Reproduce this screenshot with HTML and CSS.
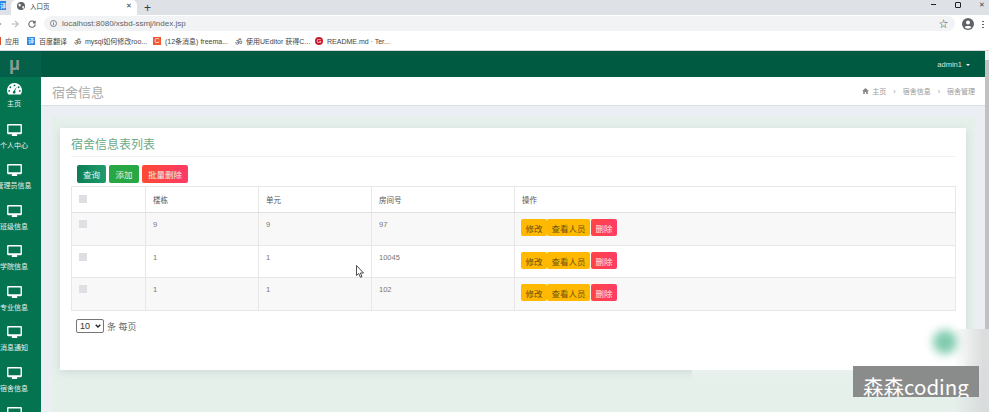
FILE: index.html
```html
<!DOCTYPE html>
<html>
<head>
  <meta charset="utf-8">
  <link rel="stylesheet" href="styles.css">
</head>
<body>
  <svg class="defs" width="0" height="0">
    <symbol id="monitor" viewBox="0 0 16 14">
      <path d="M1.2 0h13.6c.7 0 1.2.5 1.2 1.2v8.600c0 .7-.5 1.200-1.200 1.200H10.500l.5 1.600v.4H5v-.4l.5-1.600H1.200C.5 11 0 10.500 0 9.800V1.200C0 .5.500 0 1.200 0zM1.500 1.500v7.500h13V1.500z" fill="#fff" fill-rule="evenodd"/>
    </symbol>
  </svg>

  <div class="tabstrip">
    <div class="tab-stub"><span class="stub-icon">译</span></div>
    <div class="tab">
      <svg class="globe" width="8" height="8" viewBox="0 0 10 10"><circle cx="5" cy="5" r="5" fill="#5f6368"/><path d="M2 2l3 1-1 3-2-1zM6 6l3-1-1 4z" fill="#fff"/></svg>
      <span class="tab-title">入口页</span>
      <span class="tab-close">✕</span>
    </div>
    <span class="tab-new">+</span>
    <div class="win-controls">
      <span class="win-min"></span>
      <span class="win-max"></span>
      <span class="win-close">✕</span>
    </div>
  </div>

  <div class="toolbar">
    <svg class="nav-arrow" width="8" height="8" viewBox="0 0 10 10"><path d="M9 5H1M5 1L1 5l4 4" fill="none" stroke="#5f6368" stroke-width="1.300"/></svg>
    <svg class="nav-arrow" width="8" height="8" viewBox="0 0 10 10"><path d="M1 5h8M5 1l4 4-4 4" fill="none" stroke="#b4b7bb" stroke-width="1.300"/></svg>
    <svg class="nav-arrow" width="8" height="8" viewBox="0 0 10 10"><path d="M8.500 3.200A4 4 0 1 0 9 5.500M9 .8v2.800H6.200" fill="none" stroke="#5f6368" stroke-width="1.300"/></svg>
    <div class="omnibox">
      <svg width="7" height="7" viewBox="0 0 10 10"><circle cx="5" cy="5" r="4.300" fill="none" stroke="#5f6368" stroke-width="1.100"/><path d="M5 4.300v3M5 2.500v1" stroke="#5f6368" stroke-width="1.100"/></svg>
      <span class="url">localhost:8080/xsbd-ssmj/index.jsp</span>
      <span class="star">☆</span>
    </div>
    <svg class="avatar" width="12" height="12" viewBox="0 0 12 12"><circle cx="6" cy="6" r="6" fill="#5f6368"/><circle cx="6" cy="4.500" r="2" fill="#fff"/><path d="M2.500 9.200c1-1.500 6-1.500 7 0A5 5 0 0 1 2.500 9.200z" fill="#fff"/></svg>
    <span class="kebab"></span>
  </div>

  <div class="bookmarks">
    <span class="bm bm-apps"><i class="apps-dot"></i>应用</span>
    <span class="bm"><i class="bm-blue">译</i>百度翻译</span>
    <span class="bm"><i class="bm-om">ॐ</i>mysql如何修改roo...</span>
    <span class="bm"><i class="bm-red">C</i>(12条消息) freema...</span>
    <span class="bm"><i class="bm-om">ॐ</i>使用UEditor 获得C...</span>
    <span class="bm"><i class="bm-git">G</i>README.md · Ter...</span>
  </div>

  <div class="viewport">
    <div class="app">
      <div class="topbar">
        <div class="brand">μ</div>
        <div class="user">admin1 <i class="caret"></i></div>
      </div>
      <div class="main">
        <aside class="sidebar">
          <div class="side-item">
            <svg class="side-icon" width="15" height="12" viewBox="0 0 16 13"><path d="M8 0a8 8 0 0 0-6.900 12.100c.2.300.5.400.8.400h12.200c.3 0 .6-.1.800-.4A8 8 0 0 0 8 0z" fill="#fff"/><g fill="#047350"><circle cx="8" cy="2.600" r="1"/><circle cx="3.500" cy="4.600" r="1"/><circle cx="12.500" cy="4.600" r="1"/><circle cx="2.300" cy="8.600" r="1"/><circle cx="13.700" cy="8.600" r="1"/><path d="M10.600 3.800l-2 5a1.500 1.500 0 1 1-1.200-.3z"/></g></svg>
            <span>主页</span>
          </div>
          <div class="side-item"><svg class="side-icon" width="15" height="13"><use href="#monitor"/></svg><span>个人中心</span></div>
          <div class="side-item"><svg class="side-icon" width="15" height="13"><use href="#monitor"/></svg><span>管理员信息</span></div>
          <div class="side-item"><svg class="side-icon" width="15" height="13"><use href="#monitor"/></svg><span>班级信息</span></div>
          <div class="side-item"><svg class="side-icon" width="15" height="13"><use href="#monitor"/></svg><span>学院信息</span></div>
          <div class="side-item"><svg class="side-icon" width="15" height="13"><use href="#monitor"/></svg><span>专业信息</span></div>
          <div class="side-item"><svg class="side-icon" width="15" height="13"><use href="#monitor"/></svg><span>消息通知</span></div>
          <div class="side-item"><svg class="side-icon" width="15" height="13"><use href="#monitor"/></svg><span>宿舍信息</span></div>
          <div class="side-item"><svg class="side-icon" width="15" height="13"><use href="#monitor"/></svg></div>
        </aside>

        <div class="page">
          <div class="page-head">
            <h1>宿舍信息</h1>
            <div class="crumbs">
              <svg width="7" height="6" viewBox="0 0 10 9"><path d="M5 0L0 4.500h1.500V9h2.500V6h2v3h2.500V4.500H10z" fill="#888"/></svg>
              <span>主页</span><b>›</b><span>宿舍信息</span><b>›</b><span>宿舍管理</span>
            </div>
          </div>

          <div class="page-body">
            <div class="green-wrap">
              <div class="card">
                <h2>宿舍信息表列表</h2>
                <div class="actions">
                  <button class="btn btn-search">查询</button>
                  <button class="btn btn-add">添加</button>
                  <button class="btn btn-bulk">批量删除</button>
                </div>
                <table>
                  <thead>
                    <tr>
                      <th class="col-check"><span class="check"></span></th>
                      <th class="col-a">楼栋</th>
                      <th class="col-a">单元</th>
                      <th class="col-b">房间号</th>
                      <th>操作</th>
                    </tr>
                  </thead>
                  <tbody>
                    <tr>
                      <td><span class="check"></span></td><td>9</td><td>9</td><td>97</td>
                      <td class="ops"><button class="op op-yellow">修改</button><button class="op op-yellow">查看人员</button><button class="op op-red">删除</button></td>
                    </tr>
                    <tr>
                      <td><span class="check"></span></td><td>1</td><td>1</td><td>10045</td>
                      <td class="ops"><button class="op op-yellow">修改</button><button class="op op-yellow">查看人员</button><button class="op op-red">删除</button></td>
                    </tr>
                    <tr>
                      <td><span class="check"></span></td><td>1</td><td>1</td><td>102</td>
                      <td class="ops"><button class="op op-yellow">修改</button><button class="op op-yellow">查看人员</button><button class="op op-red">删除</button></td>
                    </tr>
                  </tbody>
                </table>
                <div class="pager">
                  <div class="select-wrap">
                    <select><option>10</option></select>
                    <svg class="select-arrow" width="6" height="4" viewBox="0 0 6 4"><path d="M.7.700L3 3l2.300-2.300" fill="none" stroke="#222" stroke-width="1.300"/></svg>
                  </div>
                  <span>条 每页</span>
                </div>
              </div>
            </div>
          </div>
        </div>
      </div>
    </div>
    <div class="scrollbar"><div class="thumb"></div></div>
  </div>

  <svg class="cursor" width="9" height="13" viewBox="0 0 9 13"><path d="M.5.500v10l2.300-2 1.600 3.800 1.600-.7-1.600-3.600h3.100z" fill="#fff" stroke="#222" stroke-width=".8"/></svg>

  <div class="wm-fade"></div>
  <div class="wm-dot"></div>
  <div class="watermark">森森coding</div>
</body>
</html>
```

FILE: styles.css
```css
* {
  margin: 0;
  padding: 0;
  box-sizing: border-box;
}

body {
  width: 989px;
  height: 412px;
  overflow: hidden;
  background: #fff;
  font-family: "Liberation Sans", "Noto Sans CJK SC", sans-serif;
  color: #5f6368;
}

.defs {
  display: none;
}

/* browser chrome */
.tabstrip {
  display: flex;
  align-items: flex-end;
  height: 15px;
  background: #dee1e6;
}

.tab-stub {
  width: 8px;
  height: 15px;
  overflow: hidden;
}

.stub-icon {
  display: block;
  width: 12px;
  height: 9px;
  margin: 1px 0 0 -6px;
  background: #2f86ea;
  color: #fff;
  font-size: 6px;
  text-align: right;
}

.tab {
  display: flex;
  align-items: center;
  width: 126px;
  height: 15px;
  margin-left: 3px;
  padding: 0 5px 3px 6px;
  background: #fff;
  border-radius: 5px 5px 0 0;
}

.tab-title {
  margin-left: 5px;
  font-size: 6.500px;
  color: #3c4043;
}

.tab-close {
  margin-left: auto;
  font-size: 7px;
  color: #3c4043;
}

.tab-new {
  margin: 0 0 0 7px;
  align-self: center;
  font-size: 12px;
  line-height: 12px;
  color: #3c4043;
}

.win-controls {
  display: flex;
  align-items: center;
  align-self: flex-start;
  height: 9px;
  margin-left: auto;
}

.win-min {
  width: 5px;
  height: 1px;
  margin-right: 19px;
  background: #222;
}

.win-max {
  width: 6px;
  height: 6px;
  margin-right: 18px;
  border: 1px solid #222;
  border-radius: 1px;
}

.win-close {
  width: 10px;
  font-size: 7px;
  color: #444;
}

.toolbar {
  display: flex;
  align-items: center;
  height: 17px;
  padding-right: 4px;
  background: #fff;
}

.nav-arrow {
  margin-left: 9px;
  flex: none;
}

.nav-arrow:first-child {
  margin-left: -6px;
}

.omnibox {
  display: flex;
  align-items: center;
  width: 911px;
  height: 15px;
  margin-left: 8px;
  padding: 0 7px 0 6px;
  background: #f1f3f4;
  border-radius: 8px;
}

.url {
  margin-left: 5px;
  font-size: 8px;
  color: #5f6368;
}

.star {
  margin-left: auto;
  font-size: 9px;
  color: #444;
}

.avatar {
  margin-left: 7px;
  flex: none;
}

.kebab {
  width: 2px;
  height: 8px;
  margin-left: 8px;
  background: radial-gradient(circle, #5f6368 1px, transparent 1px) 0 0 / 2px 3px;
}

.bookmarks {
  display: flex;
  align-items: center;
  height: 19px;
  font-size: 7px;
  color: #444;
  background: #fff;
  border-bottom: 1px solid #d8dadd;
}

.bm {
  display: flex;
  align-items: center;
  white-space: nowrap;
}

.bm i {
  font-style: normal;
  margin-right: 4px;
}

.bm-apps {
  width: 27px;
}

.apps-dot {
  width: 2px;
  height: 8px;
  margin-left: -1px;
  background: #d9532c;
}

.bm-blue {
  width: 8px;
  height: 8px;
  background: #2f86ea;
  color: #fff;
  font-size: 6px;
  line-height: 8px;
  text-align: center;
}

.bm-om {
  font-size: 8px;
  color: #444;
}

.bm-red {
  width: 8px;
  height: 8px;
  background: #f4562d;
  color: #fff;
  font-size: 7px;
  line-height: 8px;
  text-align: center;
}

.bm-git {
  width: 8px;
  height: 8px;
  border-radius: 50%;
  background: #c9182b;
  color: #fff;
  font-size: 6px;
  line-height: 8px;
  text-align: center;
}

.bm:nth-child(2) {
  width: 47px;
}

.bm:nth-child(3) {
  width: 79px;
}

.bm:nth-child(4) {
  width: 82px;
}

.bm:nth-child(5) {
  width: 80px;
}

/* app */
.viewport {
  display: flex;
  height: 361px;
}

.app {
  display: flex;
  flex-direction: column;
  width: 985px;
}

.scrollbar {
  width: 4px;
  padding-top: 9px;
  background: #f1f1f1;
}

.thumb {
  height: 300px;
  background: #c1c1c1;
}

.topbar {
  display: flex;
  flex: none;
  align-items: center;
  justify-content: space-between;
  height: 26px;
  padding-right: 15px;
  background: #005a41;
}

.brand {
  width: 41px;
  height: 26px;
  padding-left: 9px;
  background: #05604a;
  color: #8a9b93;
  font-size: 18px;
  font-weight: bold;
  line-height: 26px;
}

.user {
  font-size: 7.500px;
  color: #d7e3de;
}

.caret {
  display: inline-block;
  margin: 0 0 1px 2px;
  border: 2px solid transparent;
  border-top-color: #fff;
  border-bottom: 0;
}

.main {
  display: flex;
  flex: 1;
  min-height: 0;
}

.sidebar {
  flex: none;
  width: 41px;
  overflow: hidden;
  background: #047350;
  color: #e8f2ee;
}

/* the menu sits scrolled a little to the left, as it does in the capture */
.side-item {
  display: flex;
  flex-direction: column;
  align-items: center;
  width: 28px;
  height: 40.500px;
  padding-top: 6px;
  font-size: 7px;
  line-height: 10px;
  white-space: nowrap;
}

.side-icon {
  flex: none;
  margin-bottom: 4px;
}

.page {
  flex: 1;
  min-width: 0;
  background: #ebeff4;
}

.page-head {
  display: flex;
  align-items: center;
  justify-content: space-between;
  height: 29px;
  padding: 0 10px 0 11px;
  background: #fff;
  border-bottom: 1px solid #dcdfe2;
}

.page-head h1 {
  font-size: 13px;
  font-weight: 400;
  color: #a9abac;
}

.crumbs {
  display: flex;
  align-items: center;
  gap: 3px;
  font-size: 7px;
  color: #999;
}

.crumbs b {
  margin: 0 4px;
  font-weight: 400;
}

.page-body {
  padding: 11px 10px 0 11px;
}

.green-wrap {
  height: 300px;
  padding: 11px 9px 0 8px;
  background: #e6f0eb;
}

.card {
  height: 242px;
  padding: 0 10px 0 11px;
  background: #fff;
  box-shadow: 0 2px 8px rgba(150, 170, 180, .3);
}

.card h2 {
  height: 29px;
  padding-top: 10px;
  font-size: 12px;
  font-weight: 400;
  line-height: 14px;
  color: #6aaa86;
  border-bottom: 1px solid #f1f3f3;
}

.actions {
  display: flex;
  gap: 3px;
  margin: 8px 0 3px 6px;
}

.btn {
  height: 18px;
  border: 0;
  border-radius: 2px;
  color: #e6f2ec;
  font-family: inherit;
  font-size: 8.500px;
}

.btn-search {
  width: 29px;
  background: linear-gradient(90deg, #0b7d56, #1f9c6c);
}

.btn-add {
  width: 30px;
  background: #28a745;
}

.btn-bulk {
  width: 46px;
  background: linear-gradient(90deg, #ff4a33, #ff3a68);
}

table {
  width: 885px;
  table-layout: fixed;
  border-collapse: collapse;
  border: 1px solid #e7e7e7;
  font-size: 7.500px;
  color: #777;
}

th, td {
  padding: 0 7px;
  border: 1px solid #e7e7e7;
  text-align: left;
  vertical-align: top;
}

th {
  height: 26px;
  padding-top: 7px;
  font-weight: 400;
  color: #555;
  border-bottom: 1px solid #dfdfe3;
}

.col-check {
  width: 74px;
}

.col-a {
  width: 113px;
}

.col-b {
  width: 143px;
}

td {
  height: 33px;
  padding-top: 7px;
}

tbody tr:nth-child(2) td {
  height: 32px;
}

tbody tr:nth-child(odd) {
  background: #f8f8f8;
}

.check {
  display: block;
  width: 8px;
  height: 8px;
  background: #dddfe3;
}

th .check {
  margin-top: 1px;
}

td.ops {
  padding: 6px 0 0 6px;
  white-space: nowrap;
}

.op {
  height: 17px;
  padding: 0 4.500px;
  border: 0;
  border-radius: 2px;
  font-family: inherit;
  font-size: 8.500px;
  vertical-align: top;
}

.op-yellow {
  background: #ffb900;
  color: #6b5310;
}

.op-red {
  margin-left: 1px;
  background: linear-gradient(90deg, #ff4444, #ff3d66);
  color: #fde3e6;
}

.pager {
  display: flex;
  align-items: center;
  gap: 3px;
  margin: 8px 0 0 5px;
  font-size: 9px;
  color: #666;
}

.select-wrap {
  position: relative;
  width: 28px;
  height: 14px;
}

select {
  display: block;
  width: 28px;
  height: 14px;
  padding-left: 3px;
  border: 1px solid #767676;
  border-radius: 2px;
  background: #fff;
  appearance: none;
  font-family: inherit;
  font-size: 9px;
  color: #333;
}

.select-arrow {
  position: absolute;
  top: 5px;
  right: 3px;
}

/* things recorded on top of the page */
.cursor {
  position: absolute;
  left: 356px;
  top: 265px;
}

.wm-fade {
  position: absolute;
  left: 692px;
  top: 329px;
  width: 297px;
  height: 83px;
  background:
    linear-gradient(90deg, transparent 88%, rgba(215, 218, 218, .9) 98%),
    linear-gradient(180deg, #fff 38%, rgba(255, 255, 255, 0) 62%);
}

.wm-dot {
  position: absolute;
  left: 933px;
  top: 330px;
  width: 24px;
  height: 24px;
  border-radius: 50%;
  background: #7fcbae;
  filter: blur(5px);
}

.watermark {
  position: absolute;
  left: 853px;
  top: 366px;
  width: 126px;
  height: 31px;
  padding-left: 10px;
  background: #8a8c8b;
  color: #fff;
  font-family: "Noto Sans CJK SC", sans-serif;
  font-size: 20.500px;
  line-height: 40px;
  overflow: hidden;
  white-space: nowrap;
}
```
